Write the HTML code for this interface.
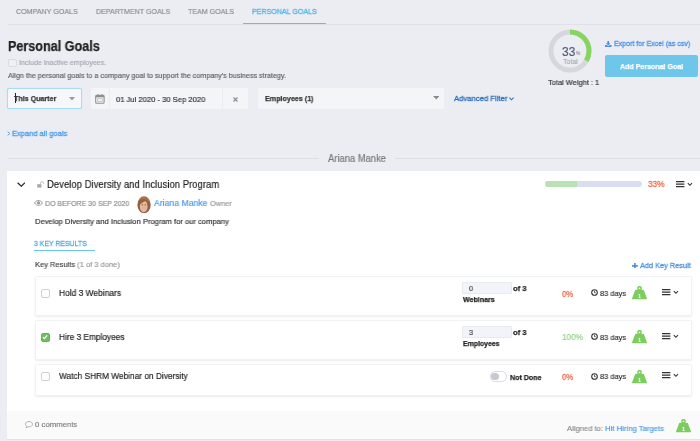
<!DOCTYPE html>
<html><head><meta charset="utf-8">
<style>
*{box-sizing:border-box;margin:0;padding:0}
html,body{width:700px;height:441px;overflow:hidden}
body{background:#ebedf3;font-family:"Liberation Sans",sans-serif;position:relative;color:#333}
.a{position:absolute}
.t{position:absolute;white-space:nowrap;line-height:1;transform-origin:0 50%;will-change:transform}
.w{background:#fff}
.row{position:absolute;left:34.5px;width:657px;background:#fff;border:1px solid #f1f2f5;border-radius:1.5px;box-shadow:0 1px 2px rgba(0,0,0,.075)}
.cb{position:absolute;left:40.75px;width:9.25px;height:9px;border:1px solid #cfd0d3;border-radius:2px;background:#fff}
.inp{position:absolute;left:462px;width:49.75px;height:11.8px;background:#f3f4f9;border:0.6px solid #e8eaf0;border-radius:1px}
</style></head><body>
<!-- tabs -->
<div class="a" style="left:8px;top:24px;width:692px;height:1px;background:#dfe1e7"></div>
<div class="a" style="left:243px;top:22.5px;width:82.5px;height:1.9px;background:#60c0ea"></div>

<div class="a" style="left:7.5px;top:58.6px;width:9.2px;height:8.6px;border:1px solid #d9dbe0;border-radius:2px;background:#eff0f5"></div>

<!-- filters -->
<div class="a" style="left:7.1px;top:87.7px;width:74.6px;height:21.2px;background:#f5f7fb;border:1.4px solid #a6dcf4;border-radius:2px;box-shadow:0 0 1px #a6dcf4"></div>
<div class="a" style="left:14.6px;top:93px;width:1.2px;height:9.6px;background:#222"></div>
<svg class="a" style="left:69px;top:96.5px" width="6" height="3.5" viewBox="0 0 6 3.5"><path d="M0 0H6L3 3.500z" fill="#9a9a9a"/></svg>

<div class="a" style="left:91px;top:88.3px;width:156.75px;height:20.7px;border-radius:2px;background:#f4f5f9"></div>
<div class="a" style="left:109.2px;top:88.3px;width:1px;height:20.7px;background:#ecedf2"></div>
<div class="a" style="left:222.2px;top:88.3px;width:1px;height:20.7px;background:#ecedf2"></div>
<svg class="a" style="left:95.400px;top:94px" width="9.800" height="9.800" viewBox="0 0 10 10"><rect x="0.700" y="1.400" width="8.600" height="8" rx="1" fill="none" stroke="#8f8f8f" stroke-width="1.100"/><rect x="0.700" y="1.400" width="8.600" height="2" fill="#8f8f8f"/><rect x="2.300" y="0.200" width="1.100" height="2" fill="#8f8f8f"/><rect x="6.600" y="0.200" width="1.100" height="2" fill="#8f8f8f"/><rect x="2.600" y="4.900" width="4.800" height="2.800" fill="none" stroke="#b5b5b5" stroke-width="0.700"/></svg>
<svg class="a" style="left:232.750px;top:96.500px" width="5" height="5" viewBox="0 0 5 5"><path d="M0.500 0.500L4.500 4.500M4.500 0.500L0.500 4.500" stroke="#8a8a8a" stroke-width="1.100"/></svg>

<div class="a" style="left:258px;top:88.3px;width:186.2px;height:20.7px;border-radius:2px;background:#f4f5f9"></div>
<svg class="a" style="left:432.5px;top:96px" width="6.5" height="3.5" viewBox="0 0 6.5 3.5"><path d="M0 0H6.500L3.250 3.500z" fill="#8a8a8a"/></svg>
<svg class="a" style="left:509.300px;top:97.300px" width="5" height="4" viewBox="0 0 5 4"><path d="M0.400 0.700L2.500 2.800L4.600 0.700" fill="none" stroke="#2f6fb8" stroke-width="1.100"/></svg>

<!-- donut -->
<svg class="a" style="left:547.4px;top:28px" width="46" height="46" viewBox="0 0 46 46">
<circle cx="23" cy="23" r="19" fill="none" stroke="#d5d7dc" stroke-width="5"/>
<circle cx="23" cy="23" r="19" fill="none" stroke="#86d562" stroke-width="5" stroke-dasharray="39.8 200" transform="rotate(-90 23 23)"/>
</svg>

<svg class="a" style="left:605px;top:40.500px" width="6.500" height="6" viewBox="0 0 6.500 6"><path d="M2.400 0h1.700v2.200h1.400L3.250 4.400 1 2.200h1.400z" fill="#4a90e2"/><path d="M0 3.900H1.800L3.250 5.200L4.700 3.900H6.500V6H0z" fill="#4a90e2"/></svg>
<div class="a" style="left:605.1px;top:55.1px;width:93.1px;height:22.2px;background:#6ec7eb;border-radius:2px"></div>

<div class="a" style="left:7.5px;top:158px;width:311.25px;height:1px;background:#dcdee3"></div>
<div class="a" style="left:394.5px;top:158px;width:305.5px;height:1px;background:#dcdee3"></div>

<!-- card -->
<div class="a w" style="left:7.3px;top:170.75px;width:692.7px;height:239.75px"></div>
<div class="a" style="left:7.3px;top:410.5px;width:692.7px;height:28.8px;background:#fafafb"></div>
<div class="a" style="left:7.3px;top:439.3px;width:692.7px;height:0.8px;background:#e0e2e7"></div>

<svg class="a" style="left:16.700px;top:181.500px" width="8.600" height="5.400" viewBox="0 0 8.600 5.400"><path d="M0.600 0.700L4.300 4.200L8 0.700" fill="none" stroke="#2a2a2a" stroke-width="1.250"/></svg>
<svg class="a" style="left:37px;top:181px" width="8" height="7" viewBox="0 0 8 7"><rect x="0.200" y="3.200" width="4.200" height="3.400" fill="#a8a8a8"/><path d="M3.500 3.200V2.300a1.600 1.600 0 0 1 3.200 0v0.800" fill="none" stroke="#bdbdbd" stroke-width="0.900"/></svg>

<div class="a" style="left:544.5px;top:181.25px;width:97.5px;height:5.75px;border-radius:3px;background:#d9dff0"></div>
<div class="a" style="left:544.5px;top:181.25px;width:32px;height:5.75px;border-radius:3px 0 0 3px;background:#b9e2b4"></div>

<svg width="0" height="0" style="position:absolute"><defs>
<g id="clock"><circle cx="3.500" cy="3.500" r="2.800" fill="none" stroke="#333" stroke-width="1.100"/><path d="M3.500 1.800V3.700H4.700" fill="none" stroke="#333" stroke-width="0.800"/></g>
<g id="wt"><path d="M3.900 3.700H11.100Q11.800 3.700 12 4.400L14.900 12.300Q15.200 13.300 14.200 13.300H0.800Q-0.200 13.300 0.100 12.300L3 4.400Q3.200 3.700 3.900 3.700z" fill="#7ccd5d"/><circle cx="7.500" cy="2.300" r="1.650" fill="none" stroke="#7ccd5d" stroke-width="1.500"/><text x="7.500" y="11.600" font-size="5.600" font-weight="bold" font-family="Liberation Sans, sans-serif" fill="#fff" text-anchor="middle">1</text></g>
<g id="ham"><path d="M0 0.700h8.400M0 3.200h8.400M0 5.700h8.400" stroke="#333" stroke-width="1.300"/><path d="M11.800 2.200l2.100 2.100 2.100-2.100" fill="none" stroke="#333" stroke-width="1.100"/></g>
</defs></svg>
<svg class="a" style="left:675.5px;top:181px" width="17" height="7"><use href="#ham"/></svg>

<svg class="a" style="left:34.300px;top:200.200px" width="9" height="5.800" viewBox="0 0 9 5.800"><path d="M0.500 2.900C1.700 1.200 3 0.500 4.500 0.500S7.300 1.200 8.500 2.900C7.300 4.600 6 5.300 4.500 5.300S1.700 4.600 0.500 2.900z" fill="none" stroke="#8e8e8e" stroke-width="0.950"/><circle cx="4.500" cy="2.800" r="1.500" fill="#8e8e8e"/></svg>
<svg class="a" style="left:137px;top:195.700px" width="14" height="17.500" viewBox="0 0 14 17.500"><defs><clipPath id="av"><ellipse cx="7.050" cy="8.750" rx="6.650" ry="8.450"/></clipPath><filter id="avb" x="-10%" y="-10%" width="120%" height="120%"><feGaussianBlur stdDeviation="0.350"/></filter></defs><g clip-path="url(#av)"><g filter="url(#avb)"><rect x="-2" y="-2" width="18" height="22" fill="#8f5f43"/><path d="M1 5C2 1 6 0 9 0.500 12 1 13.500 4 13.500 7L11 5 6 3z" fill="#a8744f"/><ellipse cx="6.700" cy="10.400" rx="3.900" ry="5.900" fill="#e7b99d"/><path d="M2.400 9C2.200 4.500 4.800 2.600 8.200 3.200 10.600 3.800 11.300 6 11.100 9.200 10.600 7 9.800 5.600 8.600 4.900 6.600 6.200 3.800 6.600 2.400 9z" fill="#96633f"/><path d="M4.600 8.900h1.500M7.600 8.900h1.500" stroke="#6a4534" stroke-width="0.800"/><path d="M5 12.200Q6.700 14.200 8.600 12.200z" fill="#fff" stroke="#c98a86" stroke-width="0.500"/></g></g></svg>

<div class="a" style="left:34.25px;top:249.5px;width:60.75px;height:1.5px;background:#6dc6ea"></div>
<svg class="a" style="left:632.300px;top:262.500px" width="5.800" height="5.800" viewBox="0 0 5.800 5.800"><path d="M2.900 0V5.800M0 2.900H5.800" stroke="#4a90e2" stroke-width="1.700"/></svg>

<div class="row" style="top:275.6px;height:40.7px"></div>
<div class="row" style="top:320.1px;height:40.2px"></div>
<div class="row" style="top:364.25px;height:32px"></div>

<div class="cb" style="top:288.5px"></div>
<div class="inp" style="top:282px"></div>
<div class="cb" style="top:332.75px;background:#6cc05d;border-color:#62b653"></div>
<svg class="a" style="left:42.400px;top:334.250px" width="6" height="6" viewBox="0 0 6 6"><path d="M0.900 3.100L2.400 4.600L5.200 1.300" stroke="#fff" stroke-width="1.200" fill="none"/></svg>
<div class="inp" style="top:326px"></div>
<div class="cb" style="top:371.75px"></div>
<div class="a" style="left:490px;top:371.25px;width:16.75px;height:10.5px;border-radius:5.25px;background:#fff;border:1px solid #dadbdf"></div>
<div class="a" style="left:490.75px;top:372.5px;width:7.75px;height:7.75px;border-radius:50%;background:#c6c9cf"></div>

<svg class="a" style="left:590.800px;top:289.200px" width="7" height="7"><use href="#clock"/></svg>
<svg class="a" style="left:590.800px;top:333.200px" width="7" height="7"><use href="#clock"/></svg>
<svg class="a" style="left:590.800px;top:372.700px" width="7" height="7"><use href="#clock"/></svg>
<svg class="a" style="left:632.1px;top:286px;will-change:transform" width="16" height="14"><use href="#wt"/></svg>
<svg class="a" style="left:632px;top:330px;will-change:transform" width="16" height="14"><use href="#wt"/></svg>
<svg class="a" style="left:632px;top:369.500px;will-change:transform" width="16" height="14"><use href="#wt"/></svg>
<svg class="a" style="left:675.700px;top:419.200px;will-change:transform" width="16" height="14"><use href="#wt"/></svg>
<svg class="a" style="left:662px;top:289px" width="17" height="7"><use href="#ham"/></svg>
<svg class="a" style="left:662px;top:333px" width="17" height="7"><use href="#ham"/></svg>
<svg class="a" style="left:662px;top:372.200px" width="17" height="7"><use href="#ham"/></svg>

<svg class="a" style="left:25px;top:421.100px" width="8" height="7.500" viewBox="0 0 8 7.500"><path d="M4 0.500C5.900 0.500 7.500 1.700 7.500 3.200S5.900 5.900 4 5.900c-0.400 0-0.800 0-1.100-0.100L1 6.800l0.600-1.500C0.900 4.800 0.500 4 0.500 3.200 0.500 1.700 2.100 0.500 4 0.500z" fill="none" stroke="#9a9a9a" stroke-width="0.700"/></svg>
<svg class="a" style="left:6.900px;top:131px" width="3.600" height="5" viewBox="0 0 3.600 5"><path d="M0.600 0.500L2.900 2.500L0.600 4.500" fill="none" stroke="#4a9be8" stroke-width="0.900"/></svg>
<div class="t" id="t1" style="left:16.25px;top:7.93px;font-size:8px;-webkit-text-stroke:0.18px;color:#8c8c8c;transform:scaleX(0.8885)">COMPANY GOALS</div>
<div class="t" id="t2" style="left:95.75px;top:7.93px;font-size:8px;-webkit-text-stroke:0.18px;color:#8c8c8c;transform:scaleX(0.8836)">DEPARTMENT GOALS</div>
<div class="t" id="t3" style="left:188px;top:7.93px;font-size:8px;-webkit-text-stroke:0.18px;color:#8c8c8c;transform:scaleX(0.8843)">TEAM GOALS</div>
<div class="t" id="t4" style="left:251.75px;top:7.93px;font-size:8px;-webkit-text-stroke:0.3px;color:#4fb6e6;transform:scaleX(0.8862)">PERSONAL GOALS</div>
<div class="t" id="title" style="left:7.8px;top:38.90px;font-size:14px;font-weight:bold;-webkit-text-stroke:0.25px;color:#222;transform:scaleX(0.8996)">Personal Goals</div>
<div class="t" id="inc" style="left:19px;top:58.93px;font-size:8px;-webkit-text-stroke:0.18px;color:#a6a8ad;transform:scaleX(0.8878)">Include inactive employees.</div>
<div class="t" id="align" style="left:7.8px;top:71.73px;font-size:8px;-webkit-text-stroke:0.18px;color:#5e5f63;transform:scaleX(0.8953)">Align the personal goals to a company goal to support the company's business strategy.</div>
<div class="t" id="tq" style="left:13.75px;top:94.53px;font-size:8px;font-weight:bold;-webkit-text-stroke:0.25px;color:#333;transform:scaleX(0.8880)">This Quarter</div>
<div class="t" id="date" style="left:116.25px;top:96.03px;font-size:8px;-webkit-text-stroke:0.18px;color:#333;transform:scaleX(0.9509)">01 Jul 2020 - 30 Sep 2020</div>
<div class="t" id="emp" style="left:264.5px;top:95.13px;font-size:8px;font-weight:bold;-webkit-text-stroke:0.25px;color:#333;transform:scaleX(0.8940)">Employees (1)</div>
<div class="t" id="adv" style="left:454px;top:94.93px;font-size:8px;-webkit-text-stroke:0.3px;color:#2f6fb8;transform:scaleX(0.9587)">Advanced Filter</div>
<div class="t" id="n33" style="left:561.75px;top:45.94px;font-size:12px;-webkit-text-stroke:0.18px;color:#545b78;transform:scaleX(0.9918)">33</div>
<div class="t" id="npc" style="left:576.25px;top:50.12px;font-size:6px;-webkit-text-stroke:0.18px;color:#9a9ca5;transform:scaleX(0.7953)">%</div>
<div class="t" id="tot" style="left:563.25px;top:58.23px;font-size:8px;-webkit-text-stroke:0.18px;color:#a9abb3;transform:scaleX(0.8725)">Total</div>
<div class="t" id="tw" style="left:547.5px;top:79.13px;font-size:8px;-webkit-text-stroke:0.18px;color:#333;transform:scaleX(0.9318)">Total Weight : 1</div>
<div class="t" id="exp" style="left:613.75px;top:40.03px;font-size:8px;-webkit-text-stroke:0.3px;color:#4a90e2;transform:scaleX(0.8796)">Export for Excel (as csv)</div>
<div class="t" id="apg" style="left:620px;top:62.63px;font-size:8px;font-weight:bold;-webkit-text-stroke:0.25px;color:#fff;transform:scaleX(0.8836)">Add Personal Goal</div>
<div class="t" id="exa" style="left:12.25px;top:129.93px;font-size:8px;-webkit-text-stroke:0.3px;color:#4a9be8;transform:scaleX(0.9409)">Expand all goals</div>
<div class="t" id="am" style="left:327.5px;top:153.60px;font-size:10.4px;-webkit-text-stroke:0.18px;color:#777;transform:scaleX(0.9045)">Ariana Manke</div>
<div class="t" id="gt" style="left:46.7px;top:178.52px;font-size:11.2px;-webkit-text-stroke:0.18px;color:#222;transform:scaleX(0.8526)">Develop Diversity and Inclusion Program</div>
<div class="t" id="p33" style="left:648px;top:180.28px;font-size:9px;-webkit-text-stroke:0.3px;color:#ef6a45;transform:scaleX(0.9159)">33%</div>
<div class="t" id="dob" style="left:45.2px;top:199.70px;font-size:7.8px;-webkit-text-stroke:0.18px;color:#8c8c8c;transform:scaleX(0.8977)">DO BEFORE 30 SEP 2020</div>
<div class="t" id="own" style="left:154.3px;top:198.12px;font-size:9.6px;-webkit-text-stroke:0.18px;color:#4a9be8;transform:scaleX(0.9020)">Ariana Manke</div>
<div class="t" id="own2" style="left:209.5px;top:199.65px;font-size:7.8px;-webkit-text-stroke:0.18px;color:#9b9b9b;transform:scaleX(0.9578)">Owner</div>
<div class="t" id="desc" style="left:34.5px;top:217.65px;font-size:7.8px;-webkit-text-stroke:0.18px;color:#333;transform:scaleX(0.9719)">Develop Diversity and Inclusion Program for our company</div>
<div class="t" id="kr3" style="left:34.25px;top:239.82px;font-size:7.6px;-webkit-text-stroke:0.3px;color:#4fa8e6;transform:scaleX(0.9100)">3 KEY RESULTS</div>
<div class="t" id="krl" style="left:34.5px;top:261.30px;font-size:7.8px;-webkit-text-stroke:0.18px;color:#444;transform:scaleX(0.9631)">Key Results <span style="color:#999">(1 of 3 done)</span></div>
<div class="t" id="akr" style="left:640.4px;top:262.43px;font-size:8px;-webkit-text-stroke:0.3px;color:#4a90e2;transform:scaleX(0.9177)">Add Key Result</div>
<div class="t" id="k1" style="left:58.75px;top:289.46px;font-size:9.2px;-webkit-text-stroke:0.18px;color:#222;transform:scaleX(0.9151)">Hold 3 Webinars</div>
<div class="t" id="k2" style="left:58.75px;top:333.21px;font-size:9.2px;-webkit-text-stroke:0.18px;color:#222;transform:scaleX(0.9033)">Hire 3 Employees</div>
<div class="t" id="k3" style="left:58.75px;top:372.46px;font-size:9.2px;-webkit-text-stroke:0.18px;color:#222;transform:scaleX(0.9038)">Watch SHRM Webinar on Diversity</div>
<div class="t" id="i1" style="left:468.75px;top:284.70px;font-size:7.8px;-webkit-text-stroke:0.18px;color:#444;transform:scaleX(0.9209)">0</div>
<div class="t" id="i2" style="left:468.75px;top:328.70px;font-size:7.8px;-webkit-text-stroke:0.18px;color:#444;transform:scaleX(0.9209)">3</div>
<div class="t" id="of1" style="left:513.25px;top:284.70px;font-size:7.8px;font-weight:bold;-webkit-text-stroke:0.25px;color:#222;transform:scaleX(0.9730)">of 3</div>
<div class="t" id="of2" style="left:513.25px;top:328.70px;font-size:7.8px;font-weight:bold;-webkit-text-stroke:0.25px;color:#222;transform:scaleX(0.9730)">of 3</div>
<div class="t" id="w1" style="left:462.5px;top:295.65px;font-size:7.8px;font-weight:bold;-webkit-text-stroke:0.25px;color:#222;transform:scaleX(0.9084)">Webinars</div>
<div class="t" id="w2" style="left:462.5px;top:339.65px;font-size:7.8px;font-weight:bold;-webkit-text-stroke:0.25px;color:#222;transform:scaleX(0.8865)">Employees</div>
<div class="t" id="pc1" style="left:562px;top:289.56px;font-size:9.2px;-webkit-text-stroke:0.3px;color:#f0694a;transform:scaleX(0.8471)">0%</div>
<div class="t" id="pc2" style="left:562.1px;top:333.31px;font-size:9.2px;-webkit-text-stroke:0.18px;color:#8fd17f;transform:scaleX(0.8979)">100%</div>
<div class="t" id="pc3" style="left:562px;top:372.51px;font-size:9.2px;-webkit-text-stroke:0.3px;color:#f0694a;transform:scaleX(0.8471)">0%</div>
<div class="t" id="d1" style="left:600px;top:289.60px;font-size:7.8px;-webkit-text-stroke:0.18px;color:#333;transform:scaleX(0.9519)">83 days</div>
<div class="t" id="d2" style="left:600px;top:333.60px;font-size:7.8px;-webkit-text-stroke:0.18px;color:#333;transform:scaleX(0.9519)">83 days</div>
<div class="t" id="d3" style="left:600px;top:373.30px;font-size:7.8px;-webkit-text-stroke:0.18px;color:#333;transform:scaleX(0.9519)">83 days</div>
<div class="t" id="nd" style="left:510px;top:374.00px;font-size:7.8px;font-weight:bold;-webkit-text-stroke:0.25px;color:#222;transform:scaleX(0.9089)">Not Done</div>
<div class="t" id="cm" style="left:34.5px;top:421.10px;font-size:7.8px;-webkit-text-stroke:0.18px;color:#808080;transform:scaleX(0.9948)">0 comments</div>
<div class="t" id="al1" style="left:567px;top:424.90px;font-size:7.8px;-webkit-text-stroke:0.18px;color:#8c8c8c;transform:scaleX(0.9767)">Aligned to:</div>
<div class="t" id="al2" style="left:605px;top:424.90px;font-size:7.8px;-webkit-text-stroke:0.18px;color:#4a9be8;transform:scaleX(0.9890)">Hit Hiring Targets</div>
</body></html>
